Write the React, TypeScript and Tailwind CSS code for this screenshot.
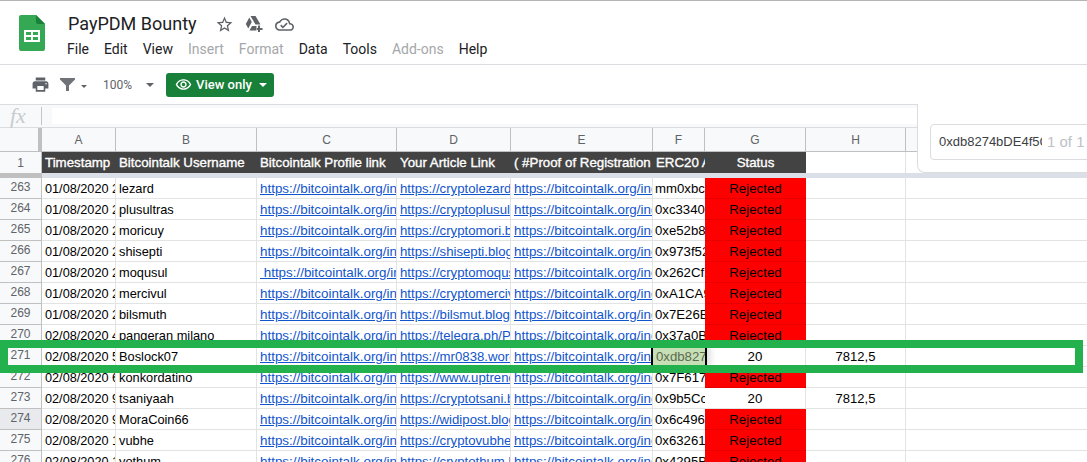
import { MdPrint, MdStarBorder, MdOutlineRemoveRedEye, MdOutlineCloudDone } from "react-icons/md";

const cols = [
  { key: "A", w: "w-[74px]" },
  { key: "B", w: "w-[141px]" },
  { key: "C", w: "w-[140px]" },
  { key: "D", w: "w-[114px]" },
  { key: "E", w: "w-[142px]" },
  { key: "F", w: "w-[52px]" },
  { key: "G", w: "w-[101px]" },
  { key: "H", w: "w-[100px]" },
];

const headers = [
  "Timestamp",
  "Bitcointalk Username",
  "Bitcointalk Profile link",
  "Your Article Link",
  "( #Proof of Registration",
  "ERC20 Address",
];

const profile = "https://bitcointalk.org/index.php?action=profile";

const rows = [
  { n: 263, time: "01/08/2020 21:02:11", name: "lezard", article: "https://cryptolezard.blog", erc: "mm0xbc41", status: "Rejected" },
  { n: 264, time: "01/08/2020 21:14:37", name: "plusultras", article: "https://cryptoplusultra.blog", erc: "0xc33407", status: "Rejected" },
  { n: 265, time: "01/08/2020 22:05:50", name: "moricuy", article: "https://cryptomori.blog", erc: "0xe52b81", status: "Rejected" },
  { n: 266, time: "01/08/2020 22:31:08", name: "shisepti", article: "https://shisepti.blogspot", erc: "0x973f52", status: "Rejected" },
  { n: 267, time: "01/08/2020 23:12:44", name: "moqusul", article: "https://cryptomoqusul", erc: "0x262Cf1", status: "Rejected", space: true },
  { n: 268, time: "01/08/2020 23:40:19", name: "mercivul", article: "https://cryptomercivul", erc: "0xA1CA93", status: "Rejected" },
  { n: 269, time: "01/08/2020 23:55:02", name: "bilsmuth", article: "https://bilsmut.blogspot", erc: "0x7E26B0", status: "Rejected" },
  { n: 270, time: "02/08/2020 4:20:33", name: "pangeran milano", article: "https://telegra.ph/Paydm", erc: "0x37a0B2", status: "Rejected" },
  { n: 271, time: "02/08/2020 5:08:16", name: "Boslock07", article: "https://mr0838.wordpress", erc: "0xdb8274", status: "20", amount: "7812,5", selected: true },
  { n: 272, time: "02/08/2020 6:47:25", name: "konkordatino", article: "https://www.uptrend.news", erc: "0x7F6172", status: "Rejected" },
  { n: 273, time: "02/08/2020 9:11:40", name: "tsaniyaah", article: "https://cryptotsani.blog", erc: "0x9b5Cc3", status: "20", amount: "7812,5" },
  { n: 274, time: "02/08/2020 9:26:58", name: "MoraCoin66", article: "https://widipost.blogspot", erc: "0x6c4961", status: "Rejected", hover: true },
  { n: 275, time: "02/08/2020 10:02:09", name: "vubhe", article: "https://cryptovubhe.blog", erc: "0x632614", status: "Rejected" },
  { n: 276, time: "02/08/2020 10:30:47", name: "yothum", article: "https://cryptothum.blog", erc: "0x4295B8", status: "Rejected" },
];

function SheetsLogo() {
  return (
    <svg width="26" height="36" viewBox="0 0 26 36">
      <path d="M2 0h15l9 9v25a2 2 0 0 1-2 2H2a2 2 0 0 1-2-2V2a2 2 0 0 1 2-2z" fill="#34a853" />
      <path d="M17 0l9 9h-7a2 2 0 0 1-2-2z" fill="#188038" />
      <path d="M5 15h16v12H5z M7 17v3h5v-3z M14 17v3h5v-3z M7 22v3h5v-3z M14 22v3h5v-3z" fill="#fff" fillRule="evenodd" />
    </svg>
  );
}

function DriveAdd() {
  return (
    <svg width="18" height="16" viewBox="0 0 18 16" fill="#5f6368">
      <path d="M5.5 0h5l5 8.500h-5z" />
      <path d="M4.300 1.500L6.800 6 3.300 12.500 0.800 8z" />
      <path d="M4.500 14.500l2.500-4.500h4.500v4.500z" />
      <path d="M13 9.500h2v2.500h2.500v2H15v2h-2v-2h-1v-2h1z" />
    </svg>
  );
}

function FilterIcon() {
  return (
    <svg width="15" height="13" viewBox="0 0 15 13" fill="#6f7377">
      <path d="M0 0h15v1.500L9 7.500V13H6V7.500L0 1.500z" />
    </svg>
  );
}

function Caret({ className }: { className: string }) {
  return <span className={`inline-block border-x-transparent ${className}`} />;
}

export default function App() {
  return (
    <div className="relative h-[462px] w-[1087px] overflow-hidden bg-white font-['Roboto',sans-serif] text-[#202124]">
      <div className="h-[1px] bg-[#b4b4b4]" />

      <div className="flex h-[64px] border-b border-[#dadce0]">
        <div className="ml-[19px] mt-[14px]">
          <SheetsLogo />
        </div>
        <div className="ml-[22px] mt-[8px]">
          <div className="ml-[1px] flex items-center">
            <span className="text-[18px] leading-[30px]">PayPDM Bounty</span>
            <span className="ml-[18px] text-[#5f6368]">
              <MdStarBorder size={19} />
            </span>
            <span className="ml-[11px]">
              <DriveAdd />
            </span>
            <span className="ml-[12px] text-[#5f6368]">
              <MdOutlineCloudDone size={19} />
            </span>
          </div>
          <div className="flex gap-[15px] text-[14px] leading-[20px]">
            <span>File</span>
            <span>Edit</span>
            <span>View</span>
            <span className="text-[#a5a7aa]">Insert</span>
            <span className="text-[#a5a7aa]">Format</span>
            <span>Data</span>
            <span>Tools</span>
            <span className="text-[#a5a7aa]">Add-ons</span>
            <span>Help</span>
          </div>
        </div>
      </div>

      <div className="flex h-[39px] items-center pl-[31px]">
        <MdPrint size={19} color="#5f6368" />
        <span className="ml-[10px] flex">
          <FilterIcon />
        </span>
        <Caret className="ml-[6px] mt-[4px] border-x-[3px] border-t-[3px] border-t-[#5f6368]" />
        <span className="ml-[16px] text-[12px] text-[#5f6368]">100%</span>
        <Caret className="ml-[14px] border-x-[4px] border-t-[4px] border-t-[#5f6368]" />
        <div className="ml-[12px] flex h-[24px] w-[108px] items-center rounded-[3px] bg-[#188038] pl-[9px] text-[13px] font-medium text-white">
          <MdOutlineRemoveRedEye size={17} />
          <span className="ml-[4px]">View only</span>
          <Caret className="ml-[7px] border-x-[4px] border-t-[4px] border-t-white" />
        </div>
      </div>

      <div className="flex h-[24px] border-y border-[#dadce0] bg-[#f8f9fa]">
        <span className="w-[41px] pl-[10px] font-['Liberation_Serif',serif] text-[22px] italic leading-[21px] text-[#c8cbcf]">fx</span>
        <div className="my-[2px] w-px bg-[#c4c7c5]" />
        <div className="my-[3px] ml-[10px] flex-1 bg-white" />
      </div>

      <div className="font-['Liberation_Sans',sans-serif] text-[13.3px] text-black">
        <div className="flex h-[24px] border-b border-[#c0c0c0] bg-[#f8f9fa] text-[12px] text-[#5f6368]">
          <div className="w-[42px] border-r-[4px] border-[#c0c0c0]" />
          {cols.map((c) => (
            <div key={c.key} className={`${c.w} flex items-center justify-center border-r border-[#c0c0c0]`}>
              {c.key}
            </div>
          ))}
          <div className="flex-1" />
        </div>

        <div className="flex h-[21px]">
          <div className="flex w-[42px] items-center justify-center border-r border-[#c0c0c0] bg-[#f8f9fa] text-[12px] text-[#5f6368]">1</div>
          {headers.map((h, i) => (
            <div
              key={h}
              className={`${cols[i].w} overflow-hidden whitespace-nowrap bg-[#434343] pl-[3px] leading-[21px] text-white [-webkit-text-stroke:0.35px_white]`}
            >
              {h}
            </div>
          ))}
          <div className="w-[101px] bg-[#434343] text-center leading-[21px] text-white [-webkit-text-stroke:0.35px_white]">Status</div>
          <div className="w-[100px] border-r border-[#e2e3e3]" />
        </div>

        <div className="flex h-[5px] bg-[#dadfe8]">
          <div className="w-[42px] bg-[#c0c0c0]" />
        </div>

        {rows.map((r) => (
          <div key={r.n} className="flex h-[21px] leading-[22px]">
            <div
              className={`flex w-[42px] items-center justify-center border-b border-r border-[#c0c0c0] pb-[2px] text-[12px] text-[#5f6368] ${
                r.hover ? "bg-[#e8eaed]" : "bg-[#f8f9fa]"
              }`}
            >
              {r.n}
            </div>
            <div className="w-[74px] overflow-hidden whitespace-nowrap border-b border-r border-[#e2e3e3] pl-[3px] text-[12.7px]">{r.time}</div>
            <div className="w-[141px] overflow-hidden whitespace-nowrap border-b border-r border-[#e2e3e3] pl-[3px] text-[12.8px]">{r.name}</div>
            <div className="w-[140px] overflow-hidden whitespace-pre border-b border-r border-[#e2e3e3] pl-[3px] text-[13.4px] text-[#1155cc] underline">
              {r.space ? ` ${profile}` : profile}
            </div>
            <div className="w-[114px] overflow-hidden whitespace-nowrap border-b border-r border-[#e2e3e3] pl-[3px] text-[13.2px] text-[#1155cc] underline">{r.article}</div>
            <div className="w-[142px] overflow-hidden whitespace-nowrap border-b border-r border-[#e2e3e3] pl-[3px] text-[13.4px] text-[#1155cc] underline">{profile}</div>
            <div
              className={`w-[52px] overflow-hidden whitespace-nowrap border-b text-[13.2px] ${
                r.selected
                  ? "relative z-10 border-b-[#e2e3e3] bg-[#c6dfb6] pl-[3px] text-[#5c6b4e] shadow-[-2px_0_0_#000,2px_0_0_#000,6px_0_6px_rgba(0,0,0,0.12)]"
                  : "border-[#e2e3e3] pl-[2px]"
              }`}
            >
              {r.erc}
            </div>
            <div
              className={`w-[101px] border-b text-center ${
                r.status === "Rejected" ? "border-[#e60000] bg-[#ff0000]" : "border-r border-[#e2e3e3]"
              }`}
            >
              {r.status}
            </div>
            <div className="w-[100px] border-b border-r border-[#e2e3e3] text-center text-[13px]">{r.amount}</div>
            <div className="flex-1 border-b border-[#e2e3e3]" />
          </div>
        ))}
      </div>

      {/* find box that floats over the grid */}
      <div className="absolute left-[917px] top-[104px] h-[69px] w-[170px] rounded-bl-[8px] border-b border-l border-[#dadce0] bg-white pl-[12px] pt-[20px]">
        <div className="flex h-[36px] w-[170px] items-center rounded-[4px] border border-[#dadce0] pl-[8px] font-['Liberation_Sans',sans-serif] text-[13px]">
          <span className="w-[103px] overflow-hidden whitespace-nowrap text-[#3c4043]">0xdb8274bDE4f5C01</span>
          <span className="ml-[5px] text-[15px] text-[#bdc1c6]">1 of 1</span>
        </div>
      </div>

      {/* green annotation drawn on the screenshot */}
      <div className="absolute left-0 top-[340px] z-20 h-[33px] w-[1083px] border-[8px] border-[#22b14c]" />
    </div>
  );
}
